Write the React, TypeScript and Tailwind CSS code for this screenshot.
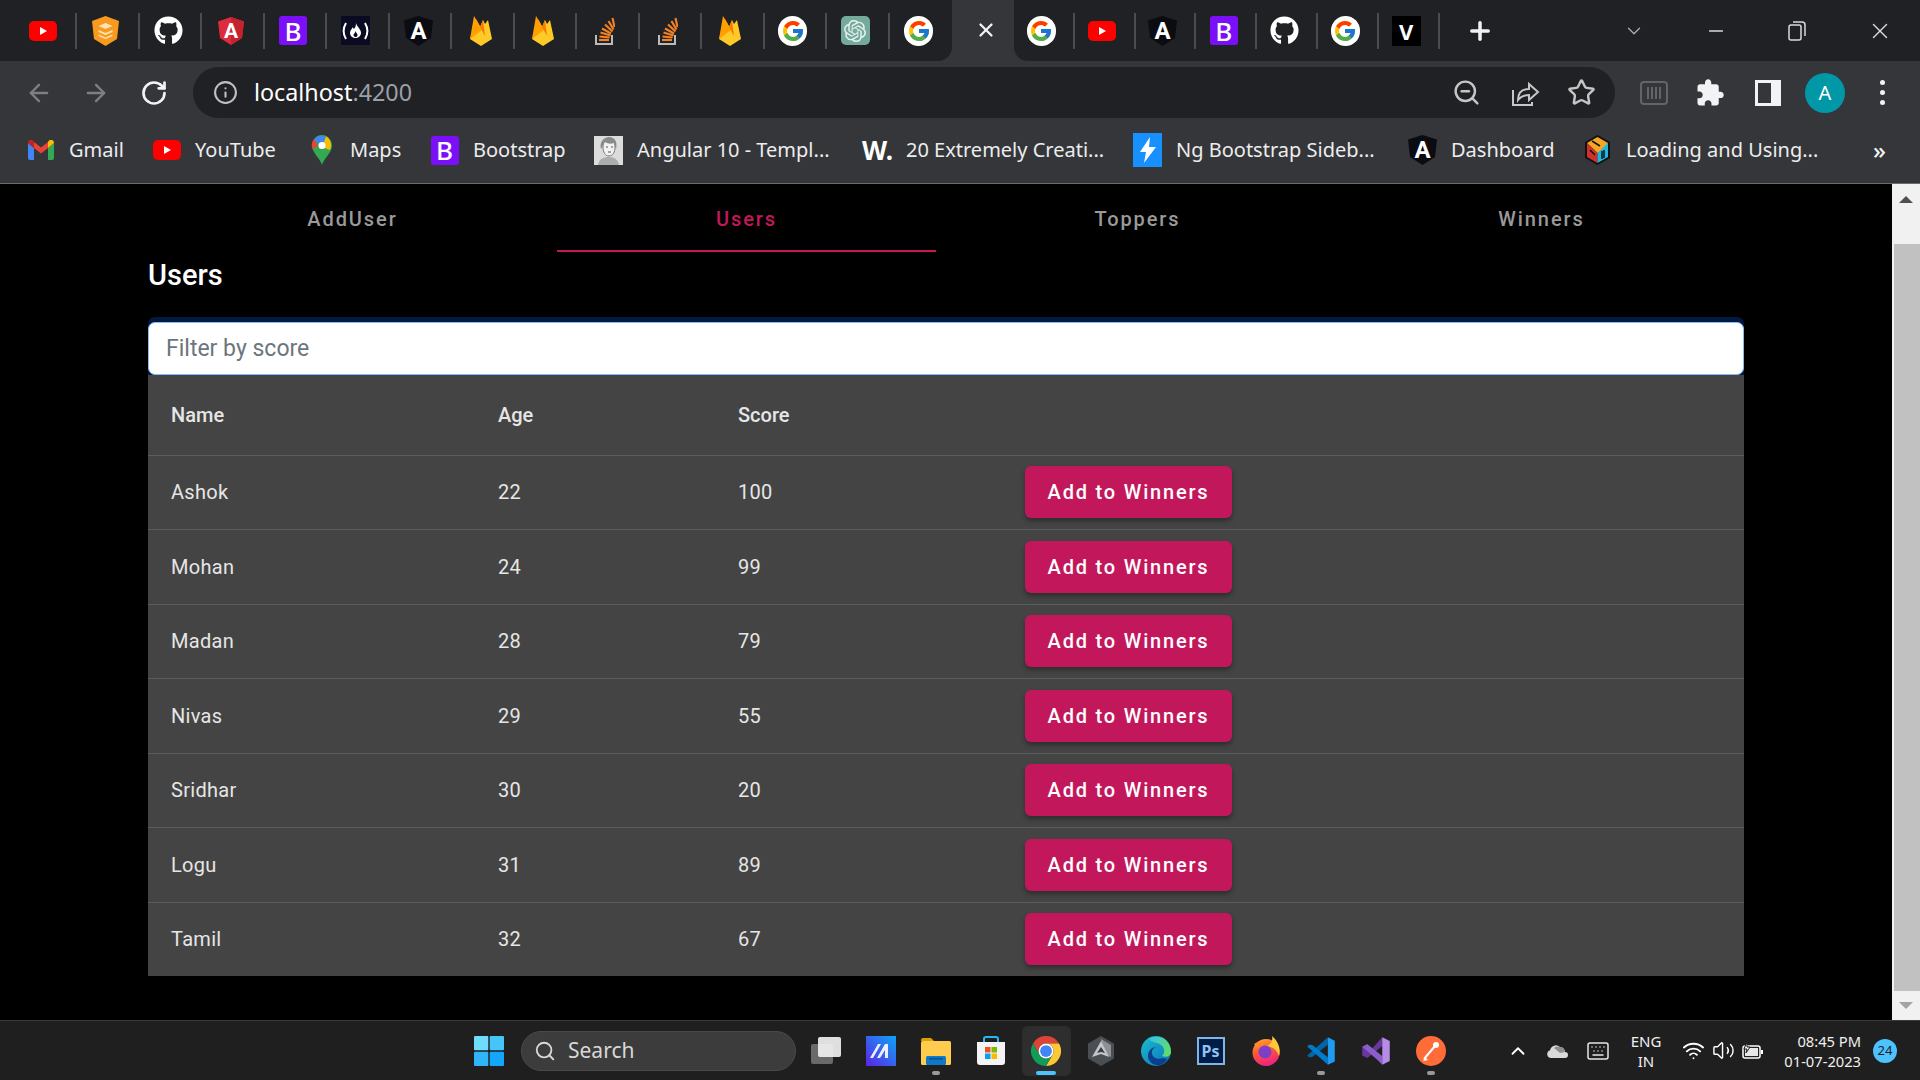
import { ArrowLeft, ArrowRight, ChevronDown, ChevronUp, Info, Keyboard, Minus, Plus, RotateCw, Search, Star, Volume2, Wifi, X, ZoomOut } from "lucide-react";
import { FaGithub } from "react-icons/fa";
import { FcGoogle } from "react-icons/fc";
import { SiOpenai } from "react-icons/si";

const users = [
  { name: "Ashok", age: 22, score: 100 },
  { name: "Mohan", age: 24, score: 99 },
  { name: "Madan", age: 28, score: 79 },
  { name: "Nivas", age: 29, score: 55 },
  { name: "Sridhar", age: 30, score: 20 },
  { name: "Logu", age: 31, score: 89 },
  { name: "Tamil", age: 32, score: 67 },
];

const YouTube = () => (
  <svg width="28" height="20" viewBox="0 0 28 20">
    <rect width="28" height="20" rx="5" fill="#f00" />
    <path d="M11 6l7 4-7 4z" fill="#fff" />
  </svg>
);

const Shield = () => (
  <svg width="27" height="30" viewBox="0 0 27 30">
    <path d="M13.500 0L27 5l-2 18-11.500 7L2 23 0 5z" fill="#f79a1e" />
    <path d="M13.500 7l7 3-7 3-7-3zM6.500 14l7 3 7-3v2l-7 3-7-3zM6.500 18.500l7 3 7-3v1.500l-7 3-7-3z" fill="#ffe3b8" />
  </svg>
);

const Github = () => <FaGithub size={29} color="#fff" />;

const AngularRed = () => (
  <svg width="26" height="28" viewBox="0 0 26 28">
    <path d="M13 0L26 4.500 24 21l-11 7L2 21 0 4.500z" fill="#dd2c3c" />
    <path d="M13 0L26 4.500 24 21l-11 7z" fill="#c3222f" />
    <text x="13" y="21" textAnchor="middle" fontFamily="Roboto" fontWeight="700" fontSize="21" fill="#fff">A</text>
  </svg>
);

const BootstrapIcon = () => (
  <div className="flex h-[29px] w-[28px] items-center justify-center rounded-[3px] bg-[#7b10f8] text-[26px] font-medium leading-none text-white">B</div>
);

const FreeCode = () => (
  <div className="flex h-[29px] w-[29px] items-center justify-center bg-[#0a0a23]">
    <svg width="27" height="18" viewBox="0 0 27 18" fill="none" stroke="#fff" strokeWidth="2">
      <path d="M4 1C1 6 1 12 4 17M23 1c3 5 3 11 0 16" />
      <path d="M14 1c1 4 5 6 5 10 0 3-3 5-5.500 5S8 14 8 11c0-3 2-4 3-6 0 3 3 2 3-4z" fill="#fff" stroke="none" />
      <path d="M13.500 9c.5 2 2 2.500 2 4s-1 2-2 2-2-.7-2-2c0-1.500 2-2 2-4z" fill="#0a0a23" stroke="none" />
    </svg>
  </div>
);

const AngularDark = () => (
  <svg width="29" height="30" viewBox="0 0 29 30">
    <path d="M14.500 0L29 4.500 27 22l-12.500 8L2 22 0 4.500z" fill="#0b0b12" />
    <text x="14.500" y="23" textAnchor="middle" fontFamily="Roboto" fontWeight="700" fontSize="24" fill="#fff">A</text>
  </svg>
);

const Firebase = () => (
  <svg width="22" height="30" viewBox="0 0 22 30">
    <path d="M0 23L4 0l6 10z" fill="#ffa000" />
    <path d="M9 15L7 5l-7 18z" fill="#f57f17" />
    <path d="M10 11L13 4l2 4 3-4 4 19-11 7L0 23z" fill="#ffca28" />
    <path d="M6 3l6 11-12 9z" fill="#ffa000" />
    <path d="M13 4l-3 7 5 9z" fill="#f57c00" />
  </svg>
);

const StackOverflow = () => (
  <svg width="20" height="28" viewBox="0 0 20 28" fill="none">
    <path d="M1 18v9h16v-9" stroke="#bcbbbb" strokeWidth="2" />
    <path d="M4 23h10" stroke="#f48024" strokeWidth="2.200" />
    <path d="M4.500 19.500l10 1M5.500 15.500l10 3M7 11.500l9 5M10 7.500l7.500 7M13.500 4l5 8.500M17.500 1l2 9" stroke="#f48024" strokeWidth="2.200" />
  </svg>
);

const Google = () => (
  <div className="flex h-[30px] w-[29px] items-center justify-center rounded-full bg-white">
    <FcGoogle size={24} />
  </div>
);

const OpenAi = () => (
  <div className="flex h-[29px] w-[29px] items-center justify-center rounded-[5px] bg-[#74aa9c]">
    <SiOpenai size={22} color="#e8f2ef" />
  </div>
);

const Vercel = () => (
  <div className="flex h-[30px] w-[29px] items-center justify-center bg-black text-[22px] font-bold leading-none text-white">V</div>
);

const Gmail = () => (
  <svg width="26" height="20" viewBox="0 0 26 20">
    <path d="M0 3v15a2 2 0 0 0 2 2h4V8z" fill="#4285f4" />
    <path d="M26 3v15a2 2 0 0 1-2 2h-4V8z" fill="#34a853" />
    <path d="M6 8l7 5.500L20 8V2l-7 5.500L6 2z" fill="#ea4335" />
    <path d="M0 3c0-3 3-4 5-2.500L6 2v6L0 3z" fill="#c5221f" />
    <path d="M26 3c0-3-3-4-5-2.500L20 2v6l6-5z" fill="#fbbc04" />
  </svg>
);

const Maps = () => (
  <svg width="22" height="30" viewBox="0 0 22 30">
    <path d="M11 30C9 23 1 18 1 10.500 1 5 5.500 0 11 0s10 5 10 10.500C21 18 13 23 11 30z" fill="#34a853" />
    <path d="M3 4l8 8 4-10a10 10 0 0 0-12 2z" fill="#4285f4" />
    <path d="M3 4a10 10 0 0 0-1.500 10L7 11z" fill="#ea4335" />
    <path d="M15 1.500L11 12l8 3c2-5 1-11-4-13.500z" fill="#fbbc04" />
    <circle cx="11" cy="10.500" r="3.500" fill="#fff" />
  </svg>
);

const Portrait = () => (
  <svg width="29" height="29" viewBox="0 0 29 29">
    <rect width="29" height="29" fill="#dcdcdc" />
    <path d="M9 11c0-5 2-8 6-8s6 3 6 8c0 5-2 9-6 9s-6-4-6-9z" fill="#f2f2f2" stroke="#777" strokeWidth="1" />
    <path d="M7 13C5 6 10 1 15 1s9 4 7 12l-2-6c-3 1-6 1-9-1z" fill="#8a8a8a" />
    <path d="M12 11h2M17 11h2M14 16h3" stroke="#555" strokeWidth="1" />
    <path d="M4 29c1-6 5-8 11-8s9 3 10 8z" fill="#adadad" />
  </svg>
);

const Bolt = () => (
  <div className="flex h-[34px] w-[29px] items-center justify-center bg-[#1890ff]">
    <svg width="16" height="26" viewBox="0 0 16 26"><path d="M10 0L0 15h6l-2 11 12-16H9z" fill="#fff" /></svg>
  </div>
);

const Cube = () => (
  <svg width="27" height="32" viewBox="0 0 27 32">
    <path d="M13.500 1L26 8v16l-12.500 7L1 24V8z" fill="#111" />
    <path d="M13.500 3L24 9l-6 9-4.500 1L3 9z" fill="#f5a623" />
    <path d="M3 9l10.500 10v10L3 23z" fill="#d0312d" />
    <path d="M24 9v14l-10.500 6V19z" fill="#1fb6e0" />
    <path d="M8 7l8 5M6 16l5 5M18 17v8M20 16v8" stroke="#111" strokeWidth="1.500" />
  </svg>
);

const leftTabs = [YouTube, Shield, Github, AngularRed, BootstrapIcon, FreeCode, AngularDark, Firebase, Firebase, StackOverflow, StackOverflow, Firebase, Google, OpenAi, Google];
const rightTabs = [Google, YouTube, AngularDark, BootstrapIcon, Github, Google, Vercel];

const bookmarks = [
  { Icon: Gmail, label: "Gmail", width: "w-[126px]" },
  { Icon: YouTube, label: "YouTube", width: "w-[155px]" },
  { Icon: Maps, label: "Maps", width: "w-[123px]" },
  { Icon: BootstrapIcon, label: "Bootstrap", width: "w-[164px]" },
  { Icon: Portrait, label: "Angular 10 - Templ...", width: "w-[269px]" },
  { Icon: () => <span className="text-[26px] font-bold leading-none text-white">W.</span>, label: "20 Extremely Creati...", width: "w-[270px]" },
  { Icon: Bolt, label: "Ng Bootstrap Sideb...", width: "w-[275px]" },
  { Icon: AngularDark, label: "Dashboard", width: "w-[175px]" },
  { Icon: Cube, label: "Loading and Using...", width: "w-[260px]" },
];

const ShareIcon = () => (
  <svg width="30" height="30" viewBox="0 0 30 30" fill="none" stroke="#c4c7c5" strokeWidth="2">
    <path d="M3 12v15h19v-3" />
    <path d="M8 22c0-7 4-11 11-11V6l9 8-9 8v-5c-5 0-8 1-11 5z" />
  </svg>
);

const Puzzle = () => (
  <svg width="30" height="30" viewBox="0 0 24 24" fill="#f1f3f4">
    <path d="M20.500 11H19V7c0-1.100-.9-2-2-2h-4V3.500C13 2.120 11.880 1 10.500 1S8 2.120 8 3.500V5H4c-1.100 0-1.990.9-1.990 2v3.800H3.500c1.490 0 2.700 1.210 2.700 2.700s-1.210 2.700-2.700 2.700H2V20c0 1.100.9 2 2 2h3.800v-1.500c0-1.490 1.210-2.700 2.700-2.700 1.490 0 2.700 1.210 2.700 2.700V22H17c1.100 0 2-.9 2-2v-4h1.500c1.380 0 2.500-1.120 2.500-2.500S21.880 11 20.500 11z" />
  </svg>
);

const SidePanel = () => (
  <svg width="26" height="26" viewBox="0 0 26 26">
    <rect width="26" height="26" fill="#f1f3f4" />
    <rect x="3" y="3" width="13" height="20" fill="#35363a" />
  </svg>
);

const Windows = () => (
  <svg width="30" height="30" viewBox="0 0 30 30">
    <rect width="14.300" height="14.300" rx="1" fill="#70dcfb" />
    <rect x="15.700" width="14.300" height="14.300" rx="1" fill="#45c5f8" />
    <rect y="15.700" width="14.300" height="14.300" rx="1" fill="#2eb6f8" />
    <rect x="15.700" y="15.700" width="14.300" height="14.300" rx="1" fill="#14a6f8" />
  </svg>
);

const TaskView = () => (
  <svg width="30" height="30" viewBox="0 0 30 30">
    <rect x="0" y="8" width="22" height="20" rx="2" fill="#6a6a6a" />
    <rect x="7" y="1" width="23" height="20" rx="2" fill="#f4f4f4" fillOpacity="0.9" />
  </svg>
);

const Teams = () => (
  <svg width="30" height="30" viewBox="0 0 30 30">
    <defs>
      <linearGradient id="tm" x1="0" y1="1" x2="1" y2="0">
        <stop offset="0" stopColor="#5b22e8" />
        <stop offset="1" stopColor="#0ea5f5" />
      </linearGradient>
    </defs>
    <rect width="30" height="30" fill="url(#tm)" />
    <path d="M4 22L12 8h3L7 22zM11 22L19 8h3v14h-3v-8l-5 8z" fill="#fff" fillOpacity="0.9" />
  </svg>
);

const Folder = () => (
  <svg width="30" height="28" viewBox="0 0 30 28">
    <path d="M0 3a2 2 0 0 1 2-2h8l3 3h-13z" fill="#e0a100" />
    <rect y="4" width="30" height="24" rx="1.500" fill="#ffcc4d" />
    <rect x="5" y="19" width="20" height="9" rx="1.500" fill="#0f78c9" />
    <rect x="8" y="21" width="14" height="1.500" fill="#0a4f8e" />
  </svg>
);

const Store = () => (
  <svg width="30" height="30" viewBox="0 0 30 30">
    <path d="M8 8V3a2 2 0 0 1 2-2h10a2 2 0 0 1 2 2v5" fill="none" stroke="#29b6f6" strokeWidth="2" />
    <path d="M1 6h28v20a3 3 0 0 1-3 3H4a3 3 0 0 1-3-3z" fill="#f4f4f4" />
    <rect x="9" y="11" width="5.500" height="5.500" fill="#f25022" />
    <rect x="15.500" y="11" width="5.500" height="5.500" fill="#7fba00" />
    <rect x="9" y="17.500" width="5.500" height="5.500" fill="#00a4ef" />
    <rect x="15.500" y="17.500" width="5.500" height="5.500" fill="#ffb900" />
  </svg>
);

const Chrome = () => (
  <svg width="30" height="30" viewBox="0 0 24 24">
    <path d="M1.600 6A12 12 0 0 1 22.400 6H12A6 6 0 0 0 6.800 15z" fill="#db4437" />
    <path d="M22.400 6A12 12 0 0 1 12 24l5.200-9A6 6 0 0 0 12 6z" fill="#fcc934" />
    <path d="M12 24A12 12 0 0 1 1.600 6l5.200 9a6 6 0 0 0 10.400 0z" fill="#0f9d58" />
    <circle cx="12" cy="12" r="6" fill="#fff" />
    <circle cx="12" cy="12" r="4.700" fill="#4285f4" />
  </svg>
);

const Hex = () => (
  <svg width="26" height="30" viewBox="0 0 26 30">
    <path d="M13 0l13 7.500v15L13 30 0 22.500v-15z" fill="#4a4f54" />
    <path d="M13 3l10 6v12l-7-3-3-6z" fill="#8d9196" />
    <path d="M13 5L4 21l9-3 8 3z" fill="#c4c7ca" />
    <path d="M13 11l-4 6 4-1 4 1z" fill="#3a3e42" />
  </svg>
);

const Edge = () => (
  <svg width="30" height="30" viewBox="0 0 30 30">
    <defs>
      <linearGradient id="eg" x1="0" y1="0" x2="1" y2="1">
        <stop offset="0" stopColor="#1cc0c8" />
        <stop offset="1" stopColor="#0a6fc2" />
      </linearGradient>
      <linearGradient id="eg2" x1="0" y1="0" x2="1" y2="0.500">
        <stop offset="0" stopColor="#35c1f1" />
        <stop offset="1" stopColor="#5fdc6a" />
      </linearGradient>
    </defs>
    <circle cx="15" cy="15" r="15" fill="url(#eg)" />
    <path d="M8 3c9-6 22 0 22 13 0 4-5 6-9 4 3-3 3-8-1-11-4-3-9-2-12-6z" fill="url(#eg2)" />
    <path d="M22 22c-5 2-10 0-11-4s3-8 7-7c-6-1-11 3-11 9s6 10 12 9c3-1 6-3 7-6z" fill="#0b3f8c" />
  </svg>
);

const Photoshop = () => (
  <div className="flex h-[28px] w-[28px] items-center justify-center border-2 border-[#7fb6e6] bg-[#001d48] text-[16px] font-bold leading-none text-[#8fc3f0]">Ps</div>
);

const Firefox = () => (
  <svg width="30" height="30" viewBox="0 0 30 30">
    <defs>
      <linearGradient id="ff" x1="0" y1="0" x2="0.300" y2="1">
        <stop offset="0" stopColor="#ffb02e" />
        <stop offset="0.500" stopColor="#ff5a36" />
        <stop offset="1" stopColor="#f0267a" />
      </linearGradient>
    </defs>
    <circle cx="15" cy="16.500" r="13.500" fill="url(#ff)" />
    <path d="M21 0c7 6 9 14 7 20-2-6-6-9-12-10 4-2 6-5 5-10z" fill="#ffc93c" />
    <circle cx="14" cy="16" r="6.500" fill="#7d3ec9" />
    <path d="M3 8c3-2 6-3 9-2-3 1-4 3-5 6z" fill="#ff8a2b" />
  </svg>
);

const VsCode = () => (
  <svg width="30" height="30" viewBox="0 0 24 24">
    <path d="M17.500 1v6L5 16.800l-2.600.2L1 15.600z" fill="#0065a9" />
    <path d="M17.500 23v-6L5 7.200 2.400 7 1 8.400z" fill="#007acc" />
    <path d="M17.500 1L23 3.700v16.600L17.500 23z" fill="#1f9cf0" />
  </svg>
);

const VisualStudio = () => (
  <svg width="30" height="30" viewBox="0 0 24 24">
    <path d="M17 1v7L5 17.500 1 15.500v-7L5 6.500 9 10z" fill="#68389f" />
    <path d="M17 23v-7L5 6.500 1 8.500 13 19z" fill="#8b5fc7" />
    <path d="M17 1l6 3v16l-6 3z" fill="#b58ce8" />
  </svg>
);

const Postman = () => (
  <svg width="30" height="30" viewBox="0 0 30 30">
    <circle cx="15" cy="15" r="15" fill="#ff6c37" />
    <path d="M8 23l11-13" stroke="#fff" strokeWidth="2" />
    <circle cx="20" cy="9" r="3" fill="#fff" />
    <path d="M7 25l5-1-3-3z" fill="#fff" />
  </svg>
);

const taskbarApps = [
  { Icon: TaskView },
  { Icon: Teams },
  { Icon: Folder, dot: true },
  { Icon: Store },
  { Icon: Chrome, active: true },
  { Icon: Hex },
  { Icon: Edge },
  { Icon: Photoshop },
  { Icon: Firefox },
  { Icon: VsCode, dot: true },
  { Icon: VisualStudio },
  { Icon: Postman, dot: true },
];

const tabs = [
  { label: "AddUser", width: "w-[409px]" },
  { label: "Users", width: "w-[379px]", active: true },
  { label: "Toppers", width: "w-[403px]" },
  { label: "Winners", width: "w-[405px]" },
];

function ChromeTop() {
  return (
    <header className="shrink-0 border-b border-[#6b6c70] bg-[#35363a] font-['Noto_Sans',sans-serif]">
      <div className="flex h-[61px]">
        <div className="flex w-[952px] items-center rounded-br-[14px] bg-[#202124] pl-[15px]">
          {leftTabs.map((Icon, i) => (
            <div key={i} className={`flex h-[36px] w-[62.500px] items-center justify-center pr-[4px] ${i < 14 ? "border-r-2 border-[#4b4c4f]" : ""}`}>
              <Icon />
            </div>
          ))}
        </div>
        <div className="flex w-[62px] items-center justify-center pb-[2px] pl-[6px]">
          <X size={22} color="#f1f3f4" strokeWidth={2.500} />
        </div>
        <div className="flex flex-1 items-center rounded-bl-[14px] bg-[#202124]">
          {rightTabs.map((Icon, i) => (
            <div key={i} className="flex h-[36px] w-[60.800px] items-center justify-center border-r-2 border-[#4b4c4f] pr-[4px]">
              <Icon />
            </div>
          ))}
          <Plus size={28} color="#f1f3f4" strokeWidth={3} className="ml-[26px]" />
          <ChevronDown size={22} color="#a8a9ab" strokeWidth={1.500} className="ml-[129px]" />
          <Minus size={22} color="#d8d9da" strokeWidth={1.500} className="ml-[60px]" />
          <svg width="18" height="20" viewBox="0 0 18 20" fill="none" stroke="#d8d9da" strokeWidth="1.500" className="ml-[61px]">
            <rect x="1" y="4" width="12" height="15" rx="2" />
            <path d="M5 1h9a3 3 0 0 1 3 3v11" />
          </svg>
          <X size={26} color="#d8d9da" strokeWidth={1.300} className="ml-[61px]" />
        </div>
      </div>

      <div className="flex h-[63px] items-center">
        <ArrowLeft size={28} color="#7e7f82" strokeWidth={2} className="ml-[25px]" />
        <ArrowRight size={28} color="#7e7f82" strokeWidth={2} className="ml-[29px]" />
        <RotateCw size={28} color="#f1f3f4" strokeWidth={2.300} className="ml-[30px]" />
        <div className="ml-[25px] flex h-[51px] w-[1422px] items-center rounded-full bg-[#202124]">
          <Info size={25} color="#bdc1c6" strokeWidth={2} className="ml-[20px]" />
          <span className="ml-[16px] text-[23.300px] leading-none text-white">
            localhost<span className="text-[#9aa0a6]">:4200</span>
          </span>
          <div className="ml-auto flex items-center">
            <ZoomOut size={29} color="#c4c7c5" strokeWidth={2} />
            <div className="ml-[29px]"><ShareIcon /></div>
            <Star size={29} color="#c4c7c5" strokeWidth={2} className="ml-[27px] mr-[19px]" />
          </div>
        </div>
        <svg width="28" height="24" viewBox="0 0 28 24" fill="none" stroke="#636467" strokeWidth="2" className="ml-[25px]">
          <rect x="1" y="1" width="26" height="22" rx="3" />
          <path d="M8 6v12M12 6v12M16 6v12M20 6v12" />
        </svg>
        <div className="ml-[27px]"><Puzzle /></div>
        <div className="ml-[30px]"><SidePanel /></div>
        <div className="ml-[24px] flex h-[40px] w-[40px] items-center justify-center rounded-full bg-[#0097a7] text-[20px] leading-none text-white">A</div>
        <div className="ml-[35px] flex flex-col gap-[5px]">
          <span className="h-[5px] w-[5px] rounded-full bg-[#f1f3f4]" />
          <span className="h-[5px] w-[5px] rounded-full bg-[#f1f3f4]" />
          <span className="h-[5px] w-[5px] rounded-full bg-[#f1f3f4]" />
        </div>
      </div>

      <div className="flex h-[59px] items-center pb-[7px] pl-[26px]">
        {bookmarks.map(({ Icon, label, width }) => (
          <div key={label} className={`flex items-center ${width}`}>
            <div className="flex w-[29px] justify-center"><Icon /></div>
            <span className="ml-[14px] text-[20px] leading-none text-[#eceded]">{label}</span>
          </div>
        ))}
        <span className="ml-auto mr-[34px] text-[24px] font-medium leading-none text-[#f1f3f4]">»</span>
      </div>
    </header>
  );
}

function UsersPage() {
  return (
    <main className="flex-1 overflow-hidden bg-black px-[148px] font-[Roboto,sans-serif]">
      <nav className="flex h-[68px]">
        {tabs.map((tab) => (
          <div
            key={tab.label}
            className={`flex items-center justify-center border-b-2 pt-[3px] text-[20px] font-medium tracking-[1.900px] ${tab.width} ${
              tab.active ? "border-[#c2185b] text-[#c2185b]" : "border-transparent text-[#9a9a9a]"
            }`}
          >
            {tab.label}
          </div>
        ))}
      </nav>

      <h2 className="mb-[24px] mt-[5px] text-[29px] font-medium leading-[36px] text-white">Users</h2>

      <div className="rounded-t-[7px] bg-[#001a40] pt-[5px]">
        <input
          readOnly
          placeholder="Filter by score"
          className="block h-[53px] w-full rounded-[7px] border-[1.500px] border-[#86b7fe] bg-white px-[17px] text-[23px] outline-none placeholder:text-[#6c757d]"
        />
      </div>

      <div className="bg-[#444444] text-[20px] text-[#e6e6e6]">
        <div className="grid h-[79.500px] grid-cols-[327px_240px_287px_1fr] items-center pl-[23px] font-medium">
          <span>Name</span>
          <span>Age</span>
          <span>Score</span>
        </div>
        {users.map((user) => (
          <div key={user.name} className="grid h-[74.500px] grid-cols-[327px_240px_287px_1fr] items-center border-t border-[#5c5c5c] pl-[23px] tracking-[0.300px]">
            <span>{user.name}</span>
            <span>{user.age}</span>
            <span>{user.score}</span>
            <div>
              <button className="h-[52px] w-[207px] rounded-[6px] bg-[#c2185b] text-[20px] font-medium tracking-[1.800px] text-white shadow-[0_3px_5px_rgba(0,0,0,0.35)]">
                Add to Winners
              </button>
            </div>
          </div>
        ))}
      </div>
    </main>
  );
}

function Scrollbar() {
  return (
    <aside className="flex w-[28px] shrink-0 flex-col bg-[#f1f1f1]">
      <div className="flex h-[60px] justify-center pt-[12px]">
        <div className="h-0 w-0 border-x-[7px] border-b-[7px] border-x-transparent border-b-[#505050]" />
      </div>
      <div className="ml-[2px] flex-1 bg-[#c1c1c1]" />
      <div className="flex h-[29px] justify-center pt-[11px]">
        <div className="h-0 w-0 border-x-[7px] border-t-[7px] border-x-transparent border-t-[#a3a3a3]" />
      </div>
    </aside>
  );
}

function Taskbar() {
  return (
    <footer className="flex h-[60px] shrink-0 items-center border-t border-[#3a3a3a] bg-[#1f1f1f] pl-[474px] font-['Noto_Sans',sans-serif] text-white">
      <Windows />
      <div className="ml-[17px] flex h-[40px] w-[275px] items-center rounded-full border border-[#4a4a4a] bg-[#3c3c3c] pl-[12px]">
        <Search size={22} color="#d8d8d8" strokeWidth={2} />
        <span className="ml-[12px] text-[21px] leading-none text-[#d8d8d8]">Search</span>
      </div>
      <div className="ml-[2px] flex">
        {taskbarApps.map(({ Icon, dot, active }, i) => (
          <div key={i} className="relative flex h-[50px] w-[55px] items-center justify-center">
            {active && <div className="absolute inset-y-0 left-[4px] right-[2px] rounded-[5px] border border-[#2c2c2c] bg-[#2e2e2e]" />}
            <div className="relative"><Icon /></div>
            {dot && <span className="absolute bottom-[1px] h-[4px] w-[8px] rounded-full bg-[#9a9a9a]" />}
            {active && <span className="absolute bottom-[1px] h-[4px] w-[20px] rounded-full bg-[#4cc2ff]" />}
          </div>
        ))}
      </div>

      <div className="ml-[40px] flex items-center">
        <div className="flex w-[40px] justify-center"><ChevronUp size={22} color="#fff" strokeWidth={2} /></div>
        <div className="flex w-[40px] justify-center">
          <svg width="22" height="14" viewBox="0 0 22 14">
            <path d="M4 14a4 4 0 0 1-1-7.800A6 6 0 0 1 13 3a5 5 0 0 1 5 5 3 3 0 0 1 0 6z" fill="#d9d9d9" />
            <path d="M7 4a6 6 0 0 1 6-1 5 5 0 0 1 5 5l-5 1z" fill="#8e8e8e" />
          </svg>
        </div>
        <div className="flex w-[40px] justify-center"><Keyboard size={24} color="#e8e8e8" strokeWidth={1.500} /></div>
        <div className="flex w-[56px] flex-col items-center text-[15px] leading-[20px] text-[#f0f0f0]">
          <span>ENG</span>
          <span>IN</span>
        </div>
        <div className="ml-[2px] flex w-[34px] justify-center"><Wifi size={23} color="#fff" strokeWidth={2} /></div>
        <div className="flex w-[26px] justify-center"><Volume2 size={23} color="#fff" strokeWidth={1.500} /></div>
        <div className="flex w-[34px] justify-center">
          <svg width="22" height="18" viewBox="0 0 22 18" fill="none">
            <rect x="1" y="4" width="17" height="12" rx="2" stroke="#fff" strokeWidth="1.500" />
            <rect x="3" y="6" width="13" height="8" fill="#e8e8e8" />
            <rect x="19" y="8" width="2" height="4" fill="#fff" />
            <path d="M5 0L2 7h3l-1 4 4-6H5z" fill="#fff" stroke="#1f1f1f" />
          </svg>
        </div>
        <div className="flex w-[91px] flex-col items-end text-[14.700px] leading-[20px] text-[#f0f0f0]">
          <span>08:45 PM</span>
          <span>01-07-2023</span>
        </div>
        <div className="ml-[12px] flex h-[24px] w-[24px] items-center justify-center rounded-full bg-[#4cc2ff] text-[13px] leading-none text-[#1f1f1f]">24</div>
      </div>
    </footer>
  );
}

export default function App() {
  return (
    <div className="flex h-screen flex-col overflow-hidden bg-black">
      <ChromeTop />
      <div className="flex min-h-0 flex-1">
        <UsersPage />
        <Scrollbar />
      </div>
      <Taskbar />
    </div>
  );
}
